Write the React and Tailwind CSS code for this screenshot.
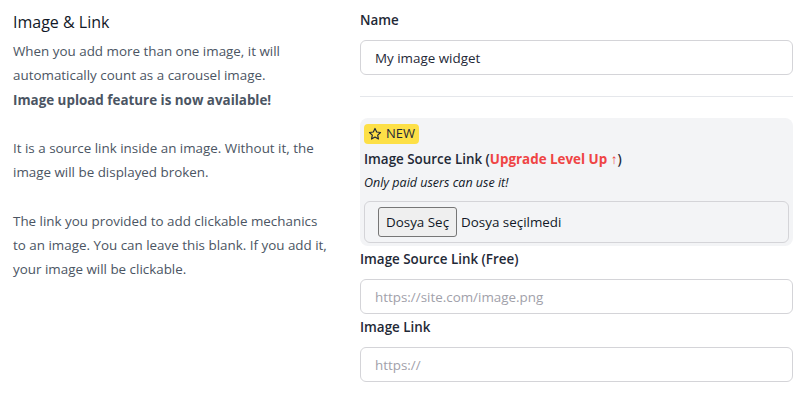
import React from "react";

const FONT = { fontFamily: '"Open Sans", "Noto Sans", sans-serif' };

function StarIcon() {
  return (
    <svg width="14" height="14" viewBox="0 0 24 24" fill="none" stroke="currentColor" strokeWidth="2" strokeLinejoin="round">
      <path d="M12 2.5l2.9 6.1 6.6.8-4.9 4.6 1.3 6.6L12 17.3l-5.9 3.3 1.3-6.6-4.9-4.6 6.6-.8z" />
    </svg>
  );
}

function TextInput({ value, placeholder }) {
  return (
    <input
      readOnly
      defaultValue={value}
      placeholder={placeholder}
      className="w-full h-[35px] rounded-md border border-[#d4d4d8] bg-white px-[14px] text-[13.4px] text-[#1f2937] placeholder:text-[#a1a1aa] outline-none"
    />
  );
}

export default function App() {
  return (
    <div className="flex w-[805px] h-[399px] bg-white text-[13.4px]" style={FONT}>
      {/* Texto de ayuda */}
      <div className="w-[360px] pl-[13px] pt-[11px]">
        <h3 className="text-[16px] font-medium text-[#111827] leading-[22px] mb-[6px]">Image &amp; Link</h3>
        <p className="text-[#4b5563] leading-[24.25px]">
          When you add more than one image, it will
          <br />automatically count as a carousel image.
          <br /><b className="font-bold">Image upload feature is now available!</b>
          <br /><br />It is a source link inside an image. Without it, the
          <br />image will be displayed broken.
          <br /><br />The link you provided to add clickable mechanics
          <br />to an image. You can leave this blank. If you add it,
          <br />your image will be clickable.
        </p>
      </div>

      {/* Formulario */}
      <div className="w-[433px] pt-[10px]">
        <label className="block font-semibold text-[#1f2937] leading-[20px] mb-[10px]">Name</label>
        <TextInput value="My image widget" />
        <hr className="my-[21px] border-[#e5e7eb]" />

        <div className="rounded-lg bg-[#f3f4f6] px-[4px] pt-[6px] pb-[3px]">
          <span className="inline-flex items-center gap-[4px] rounded bg-[#fde047] px-[4px] h-[20px] text-[13px] text-[#1f2937]">
            <StarIcon /> NEW
          </span>
          <div className="font-semibold text-[#1f2937] leading-[20px] mt-[3px]">
            Image Source Link (<span className="text-[#ef4444] font-bold">Upgrade Level Up ↑</span>)
          </div>
          <div className="italic text-[12.5px] text-[#111827] leading-[20px] mt-[4px]">Only paid users can use it!</div>
          <div className="mt-[8px] flex items-center h-[42px] rounded-md border border-[#d4d4d8] px-[13px]">
            <span className="inline-flex items-center h-[30px] px-[7px] rounded-[3px] border border-[#767676] bg-[#efefef] text-[#111827]">Dosya Seç</span>
            <span className="ml-[4px] text-[#111827]">Dosya seçilmedi</span>
          </div>
        </div>

        <label className="block font-semibold text-[#1f2937] leading-[20px] mt-[3px] mb-[10px]">Image Source Link (Free)</label>
        <TextInput placeholder="https://site.com/image.png" />
        <label className="block font-semibold text-[#1f2937] leading-[20px] mt-[3px] mb-[10px]">Image Link</label>
        <TextInput placeholder="https://" />
      </div>
    </div>
  );
}
